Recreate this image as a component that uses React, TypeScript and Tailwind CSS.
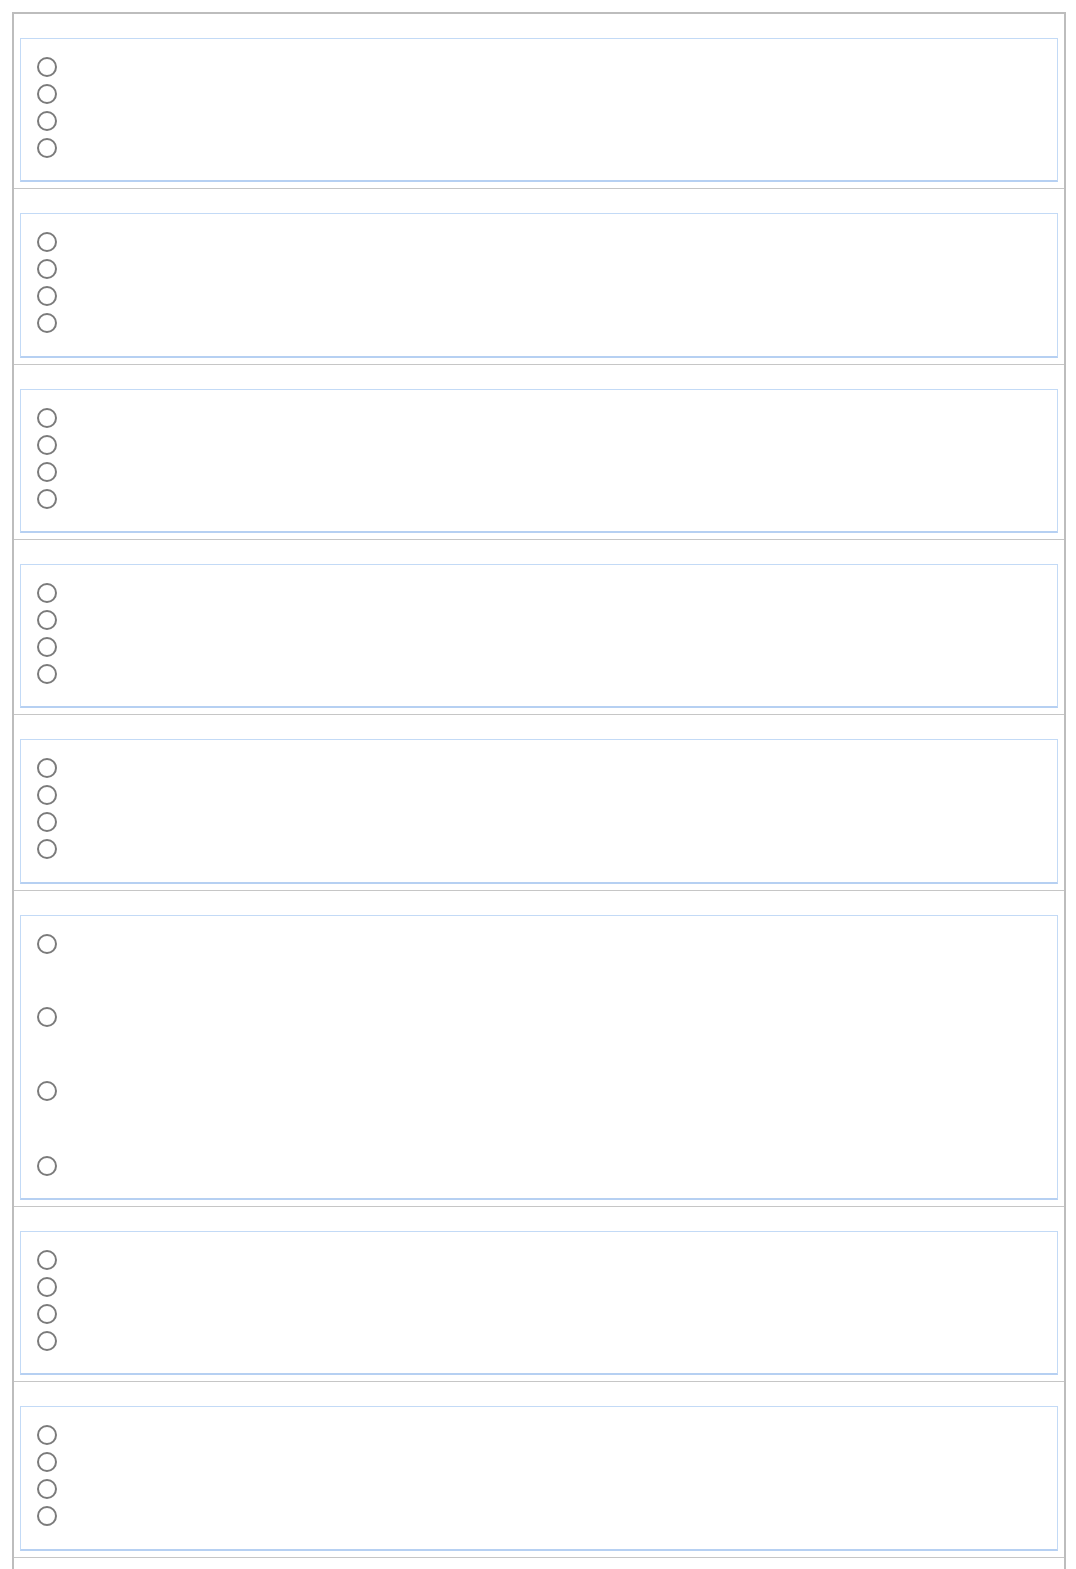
import React from "react";

function Radio() {
  return <div className="w-[20px] h-[20px] rounded-full border-2 border-[#7b7b7b] bg-white" />;
}

function Section({ rows }: { rows: number[] }) {
  return (
    <div className="border-b border-[#c6c6c6] px-[6px] pt-[24px] pb-[6px]">
      <div className="border border-[#c3daf6] border-b-2 border-b-[#b6d0f2] pl-[16px] pt-[18px] pb-[15.33px]">
        {rows.map((h, i) => (
          <div key={i} style={{ height: h }} className="flex items-start">
            <Radio />
          </div>
        ))}
      </div>
    </div>
  );
}

export default function App() {
  const normal = [27, 27, 27, 27];
  const tall = [73.5, 73.5, 75, 27];
  const sections = [normal, normal, normal, normal, normal, tall, normal, normal, normal];
  return (
    <div className="h-[1569px] overflow-hidden bg-white" style={{ fontFamily: "'Liberation Sans', Arial, sans-serif" }}>
      <div className="ml-[12px] mt-[12px] w-[1054px] border-l-2 border-t-2 border-r-2 border-[#bdbdbd]">
        {sections.map((r, i) => (
          <Section key={i} rows={r} />
        ))}
      </div>
    </div>
  );
}
